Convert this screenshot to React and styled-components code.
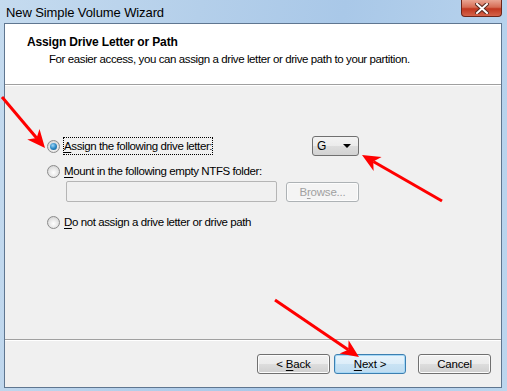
import React from 'react';
import styled, { createGlobalStyle } from 'styled-components';

const GlobalStyle = createGlobalStyle`
    html, body {
        margin: 0;
        padding: 0;
        background: #ffffff;
    }
    body {
        font-family: "Liberation Sans", Arial, sans-serif;
    }
`;

const Window = styled.div`
    position: relative;
    width: 507px;
    height: 391px;
    box-sizing: border-box;
    display: flex;
    flex-direction: column;
    padding: 0 5px 3px 4px;
    background: linear-gradient(100deg, #c5dbef 0%, #b4cfea 35%, #a9c8e8 60%, #bcd6ee 100%);
    overflow: hidden;
`;

const TitleBar = styled.div`
    height: 23px;
    display: flex;
    align-items: flex-start;
    justify-content: space-between;
`;

const Title = styled.div`
    padding: 5px 0 0 2px;
    font-size: 13px;
    letter-spacing: -0.1px;
    color: #000000;
`;

const CloseButton = styled.div`
    width: 41px;
    height: 17px;
    box-sizing: border-box;
    border: 1px solid #6d2519;
    border-top: none;
    border-radius: 0 0 4px 4px;
    background: linear-gradient(#e9a593 0%, #d66d55 45%, #c1371f 55%, #d4634a 100%);
    display: flex;
    align-items: center;
    justify-content: center;
`;

const Client = styled.div`
    flex: 1;
    display: flex;
    flex-direction: column;
    background: #f0f0f0;
    border: 1px solid #5f7690;
`;

const Header = styled.div`
    height: 61px;
    box-sizing: border-box;
    background: #ffffff;
    border-bottom: 1px solid #a0a0a0;
    padding: 11px 0 0 22px;
`;

const HeaderTitle = styled.div`
    font-size: 12px;
    font-weight: bold;
    line-height: 14px;
    letter-spacing: -0.15px;
    color: #000000;
`;

const HeaderText = styled.div`
    margin: 3px 0 0 22px;
    font-size: 11.5px;
    line-height: 14px;
    letter-spacing: -0.4px;
    color: #000000;
`;

const Body = styled.div`
    flex: 1;
    padding: 50px 0 0 42px;
    border-top: 1px solid #ffffff;
`;

const Options = styled.div`
    width: 312px;
    display: flex;
    flex-direction: column;
`;

const Row = styled.div`
    display: flex;
    align-items: center;
    justify-content: space-between;
    height: ${(p) => p.$h || 16}px;
    margin-top: ${(p) => p.$mt || 0}px;
`;

const RadioLabel = styled.label`
    display: flex;
    align-items: center;
    gap: 3px;
    font-size: 11.5px;
    letter-spacing: -0.4px;
    color: #000000;
`;

const RadioDot = styled.span`
    width: 13px;
    height: 13px;
    box-sizing: border-box;
    border-radius: 50%;
    border: 1px solid #8b8b8b;
    background: radial-gradient(circle at 50% 60%, #ffffff 0%, #e4e4e4 55%, #c8c8c8 100%);
    display: flex;
    align-items: center;
    justify-content: center;

    &::after {
        content: '';
        width: 7px;
        height: 7px;
        border-radius: 50%;
        display: ${(p) => (p.$checked ? 'block' : 'none')};
        background: radial-gradient(circle at 40% 35%, #9fd7f7 0%, #2d8ac7 50%, #0b4f80 100%);
    }
`;

const LabelText = styled.span`
    padding: 1px 0;
    border: 1px ${(p) => (p.$focus ? 'dotted #000000' : 'solid transparent')};
    line-height: 14px;
`;

const Key = styled.span`
    text-decoration: underline;
    text-underline-offset: 2px;
`;

const DropDown = styled.div`
    width: 47px;
    height: 20px;
    box-sizing: border-box;
    border: 1px solid #707070;
    border-radius: 3px;
    background: linear-gradient(#f3f3f3 0%, #ebebeb 50%, #dddddd 51%, #d2d2d2 100%);
    display: flex;
    align-items: center;
    justify-content: space-between;
    padding: 0 7px 0 4px;
    font-size: 12px;
    color: #000000;
`;

const Caret = styled.span`
    width: 0;
    height: 0;
    border-left: 4px solid transparent;
    border-right: 4px solid transparent;
    border-top: 4px solid #000000;
`;

const FolderRow = styled.div`
    display: flex;
    align-items: center;
    justify-content: space-between;
    margin: 2px 0 0 19px;
    height: 21px;
`;

const TextBox = styled.div`
    width: 211px;
    height: 21px;
    box-sizing: border-box;
    border: 1px solid #b5b5b5;
    border-radius: 2px;
    background: #f0f0f0;
`;

const Button = styled.div`
    width: ${(p) => p.$w || 73}px;
    height: 20px;
    box-sizing: border-box;
    border: 1px solid ${(p) => (p.$disabled ? '#adb2b5' : p.$default ? '#3c7fb1' : '#707070')};
    border-radius: 3px;
    background: ${(p) =>
        p.$disabled
            ? '#f4f4f4'
            : p.$default
            ? 'linear-gradient(#e8f4fc 0%, #dcedf9 50%, #c9e3f4 51%, #bfdcf1 100%)'
            : 'linear-gradient(#f2f2f2 0%, #ebebeb 50%, #dddddd 51%, #cfcfcf 100%)'};
    box-shadow: ${(p) => (p.$default ? 'inset 0 0 0 1px #a6d8f6' : 'inset 0 0 0 1px #fcfcfc')};
    margin-right: ${(p) => p.$mr || 0}px;
    display: flex;
    align-items: center;
    justify-content: center;
    font-size: 11.5px;
    letter-spacing: -0.2px;
    white-space: pre;
    color: ${(p) => (p.$disabled ? '#a0a0a0' : '#000000')};
`;

const Footer = styled.div`
    height: 48px;
    box-sizing: border-box;
    border-top: 1px solid #a0a0a0;
    box-shadow: inset 0 1px 0 #ffffff;
    display: flex;
    justify-content: flex-end;
    padding: 14px 10px 0 0;
    gap: 4px;
`;

const Overlay = styled.svg`
    position: absolute;
    left: 0;
    top: 0;
    pointer-events: none;
`;

function Arrow({ from, to }) {
    const [x1, y1] = from;
    const [x2, y2] = to;
    const dx = x2 - x1;
    const dy = y2 - y1;
    const len = Math.hypot(dx, dy);
    const ux = dx / len;
    const uy = dy / len;
    const head = 18;
    const half = 8;
    const bx = x2 - ux * head;
    const by = y2 - uy * head;
    const notchX = x2 - ux * (head - 5);
    const notchY = y2 - uy * (head - 5);
    const points = [
        [x2, y2],
        [bx - uy * half, by + ux * half],
        [notchX, notchY],
        [bx + uy * half, by - ux * half],
    ]
        .map((p) => p.join(','))
        .join(' ');
    return (
        <g>
            <line x1={x1} y1={y1} x2={notchX} y2={notchY} stroke="#ff0000" strokeWidth="3" />
            <polygon points={points} fill="#ff0000" />
        </g>
    );
}

export default function App() {
    return (
        <>
            <GlobalStyle />
            <Window>
                <TitleBar>
                    <Title>New Simple Volume Wizard</Title>
                    <CloseButton>
                        <svg width="14" height="11" viewBox="0 0 14 11">
                            <path
                                d="M2 1 L12 10 M12 1 L2 10"
                                stroke="#5a2a20"
                                strokeWidth="4"
                                strokeLinecap="square"
                            />
                            <path
                                d="M2 1 L12 10 M12 1 L2 10"
                                stroke="#ffffff"
                                strokeWidth="2"
                                strokeLinecap="square"
                            />
                        </svg>
                    </CloseButton>
                </TitleBar>
                <Client>
                    <Header>
                        <HeaderTitle>Assign Drive Letter or Path</HeaderTitle>
                        <HeaderText>
                            For easier access, you can assign a drive letter or drive path to your partition.
                        </HeaderText>
                    </Header>
                    <Body>
                        <Options>
                            <Row $h={20}>
                                <RadioLabel>
                                    <RadioDot $checked />
                                    <LabelText $focus>
                                        <Key>A</Key>ssign the following drive letter:
                                    </LabelText>
                                </RadioLabel>
                                <DropDown>
                                    G<Caret />
                                </DropDown>
                            </Row>
                            <Row $mt={7}>
                                <RadioLabel>
                                    <RadioDot />
                                    <LabelText>
                                        <Key>M</Key>ount in the following empty NTFS folder:
                                    </LabelText>
                                </RadioLabel>
                            </Row>
                            <FolderRow>
                                <TextBox />
                                <Button $disabled>
                                    B<Key>r</Key>owse...
                                </Button>
                            </FolderRow>
                            <Row $mt={12}>
                                <RadioLabel>
                                    <RadioDot />
                                    <LabelText>
                                        <Key>D</Key>o not assign a drive letter or drive path
                                    </LabelText>
                                </RadioLabel>
                            </Row>
                        </Options>
                    </Body>
                    <Footer>
                        <Button>
                            {'< '}
                            <Key>B</Key>ack
                        </Button>
                        <Button $default $w={72} $mr={8}>
                            <Key>N</Key>
                            {'ext >'}
                        </Button>
                        <Button>Cancel</Button>
                    </Footer>
                </Client>
                <Overlay width="507" height="391">
                    <Arrow from={[2, 97]} to={[45, 148]} />
                    <Arrow from={[442, 201]} to={[362, 155]} />
                    <Arrow from={[275, 300]} to={[359, 357]} />
                </Overlay>
            </Window>
        </>
    );
}
